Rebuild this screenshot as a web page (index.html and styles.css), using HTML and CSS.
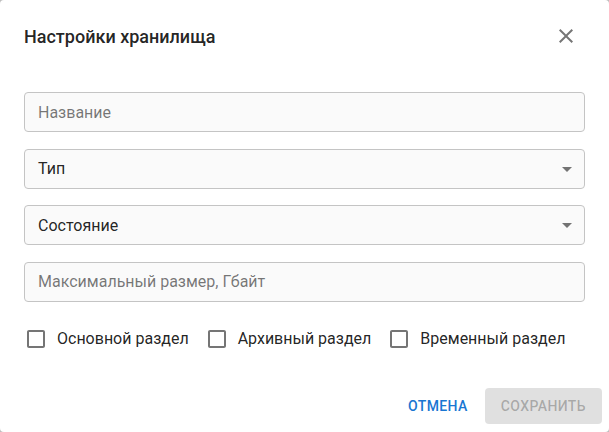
FILE: index.html
```html
<!DOCTYPE html>
<html lang="ru">
<head>
<meta charset="utf-8">
<title>Настройки хранилища</title>
<link rel="stylesheet" href="styles.css">
</head>
<body>
<div class="dialog">
  <div class="header">
    <h2 class="title">Настройки хранилища</h2>
    <button class="close" aria-label="Закрыть">
      <svg viewBox="0 0 24 24" width="24" height="24"><path d="M19 6.41L17.59 5 12 10.59 6.41 5 5 6.41 10.59 12 5 17.59 6.41 19 12 13.41 17.59 19 19 17.59 13.41 12z"/></svg>
    </button>
  </div>
  <div class="form">
    <div class="field"><span class="placeholder">Название</span></div>
    <div class="field select"><span class="value">Тип</span>
      <svg class="arrow" viewBox="0 0 24 24" width="24" height="24"><path d="M7 10l5 5 5-5z"/></svg>
    </div>
    <div class="field select"><span class="value">Состояние</span>
      <svg class="arrow" viewBox="0 0 24 24" width="24" height="24"><path d="M7 10l5 5 5-5z"/></svg>
    </div>
    <div class="field"><span class="placeholder">Максимальный размер, Гбайт</span></div>
    <div class="checks">
      <label class="check">
        <svg class="box" viewBox="0 0 24 24" width="24" height="24"><path d="M19 5v14H5V5h14m0-2H5c-1.11 0-2 .9-2 2v14c0 1.1.89 2 2 2h14c1.1 0 2-.9 2-2V5c0-1.1-.9-2-2-2z"/></svg>
        <span>Основной раздел</span>
      </label>
      <label class="check">
        <svg class="box" viewBox="0 0 24 24" width="24" height="24"><path d="M19 5v14H5V5h14m0-2H5c-1.11 0-2 .9-2 2v14c0 1.1.89 2 2 2h14c1.1 0 2-.9 2-2V5c0-1.1-.9-2-2-2z"/></svg>
        <span>Архивный раздел</span>
      </label>
      <label class="check">
        <svg class="box" viewBox="0 0 24 24" width="24" height="24"><path d="M19 5v14H5V5h14m0-2H5c-1.11 0-2 .9-2 2v14c0 1.1.89 2 2 2h14c1.1 0 2-.9 2-2V5c0-1.1-.9-2-2-2z"/></svg>
        <span>Временный раздел</span>
      </label>
    </div>
  </div>
  <div class="actions">
    <button class="btn btn-text">Отмена</button>
    <button class="btn btn-disabled" disabled>Сохранить</button>
  </div>
</div>
</body>
</html>
```

FILE: styles.css
```css
html, body {
  margin: 0;
  padding: 0;
  background: #bdbdbd;
}
body {
  font-family: Roboto, "Liberation Sans", sans-serif;
}
.dialog {
  width: 609px;
  height: 432px;
  background: #fff;
  border-radius: 4px;
  display: flex;
  flex-direction: column;
  box-sizing: border-box;
}
.header {
  display: flex;
  justify-content: space-between;
  align-items: flex-start;
  padding: 24px 31px 0 24px;
}
.title {
  margin: 1px 0 0;
  font-size: 18px;
  font-weight: 500;
  line-height: 24px;
  color: rgba(0, 0, 0, 0.87);
}
.close {
  width: 24px;
  height: 24px;
  padding: 0;
  border: 0;
  background: none;
  display: flex;
}
.close svg {
  fill: rgba(0, 0, 0, 0.54);
}
.form {
  padding: 43px 24px 0;
  display: flex;
  flex-direction: column;
  gap: 16.67px;
}
.field {
  height: 40px;
  box-sizing: border-box;
  border: 1px solid #c4c4c4;
  border-radius: 4px;
  background: #fafafa;
  display: flex;
  align-items: center;
  justify-content: space-between;
  padding: 0 5px 0 13px;
  font-size: 16px;
}
.placeholder {
  color: rgba(0, 0, 0, 0.54);
}
.value {
  color: rgba(0, 0, 0, 0.87);
}
.arrow {
  fill: rgba(0, 0, 0, 0.54);
}
.checks {
  margin-top: 8px;
  display: flex;
  align-items: center;
  gap: 16px;
}
.check {
  display: flex;
  align-items: center;
  gap: 9px;
  font-size: 16px;
  color: rgba(0, 0, 0, 0.87);
}
.box {
  fill: rgba(0, 0, 0, 0.54);
}
.actions {
  margin-top: auto;
  display: flex;
  justify-content: flex-end;
  gap: 9px;
  padding: 8px 7px 8px 8px;
}
.btn {
  height: 36px;
  border: 0;
  border-radius: 4px;
  font-family: Roboto, "Liberation Sans", sans-serif;
  font-size: 14px;
  font-weight: 500;
  letter-spacing: 0.4px;
  text-transform: uppercase;
  background: none;
}
.btn-text {
  padding: 0 8px;
  color: #1976d2;
}
.btn-disabled {
  padding: 0 16px;
  background: rgba(0, 0, 0, 0.12);
  color: rgba(0, 0, 0, 0.26);
}
```
